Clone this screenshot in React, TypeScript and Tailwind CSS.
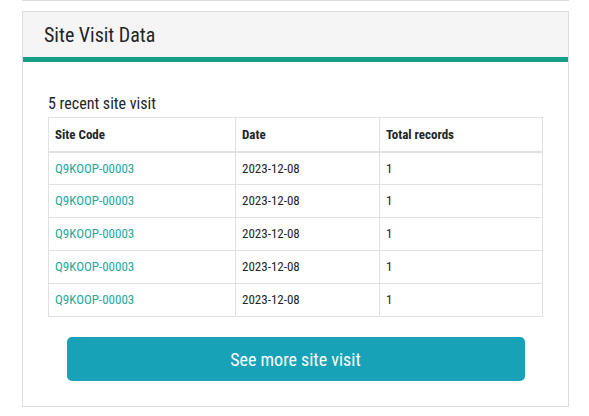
import React from 'react';

const visits = [
  { code: 'Q9KOOP-00003', date: '2023-12-08', total: 1 },
  { code: 'Q9KOOP-00003', date: '2023-12-08', total: 1 },
  { code: 'Q9KOOP-00003', date: '2023-12-08', total: 1 },
  { code: 'Q9KOOP-00003', date: '2023-12-08', total: 1 },
  { code: 'Q9KOOP-00003', date: '2023-12-08', total: 1 },
];

export default function App() {
  return (
    <div className="min-h-screen bg-white font-['Roboto',sans-serif] [font-stretch:condensed] text-[#212529]">
      <div className="ml-[22px] w-[547px] border-b border-[#dedede]" />
      <div className="ml-[22px] mt-[10px] w-[547px] border border-[#dedede]">
        <div className="h-[45px] bg-[#f5f5f5] pl-[21px] flex items-center">
          <h2 className="text-[20px] leading-none">Site Visit Data</h2>
        </div>
        <div className="h-[5px] bg-[#179e89]" />
        <div className="px-[25px] pt-[30px] pb-[25px]">
          <p className="text-[16px] leading-6 mb-[1px]">5 recent site visit</p>
          <table className="w-full border-collapse text-[13px]">
            <thead>
              <tr className="h-[34px] border-b-2 border-[#dee2e6]">
                <th className="w-[187px] border border-[#dee2e6] px-[6px] text-left font-bold">Site Code</th>
                <th className="w-[144px] border border-[#dee2e6] px-[6px] text-left font-bold">Date</th>
                <th className="border border-[#dee2e6] px-[6px] text-left font-bold">Total records</th>
              </tr>
            </thead>
            <tbody>
              {visits.map((v, i) => (
                <tr key={i} className="h-[33px]">
                  <td className="border border-[#dee2e6] px-[6px] text-[#25a99b]">{v.code}</td>
                  <td className="border border-[#dee2e6] px-[6px]">{v.date}</td>
                  <td className="border border-[#dee2e6] px-[6px]">{v.total}</td>
                </tr>
              ))}
            </tbody>
          </table>
          <button className="mt-[20px] mx-auto block w-[458px] h-[44px] rounded-[5px] bg-[#18a2b8] text-white text-[18px]">
            See more site visit
          </button>
        </div>
      </div>
    </div>
  );
}
